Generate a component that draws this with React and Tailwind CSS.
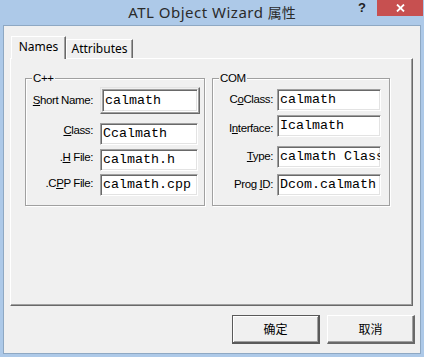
import React from 'react';

const label = "font-['Liberation_Sans',sans-serif] text-[11.5px] tracking-[-0.4px] text-black leading-none whitespace-nowrap";
const mono = "font-['Liberation_Mono',monospace] text-[13.33px] text-black leading-none whitespace-nowrap";

// sunken edit field, classic 3D look
function Field({ value, w, h = 22 }) {
  return (
    <div
      className={`flex items-center overflow-hidden bg-white pl-[1px] border border-t-[#a0a0a0] border-l-[#a0a0a0] border-r-white border-b-white shadow-[inset_1px_1px_0_#696969,inset_-1px_-1px_0_#e3e3e3] ${mono}`}
      style={{ width: w, height: h }}
    >
      <span className="pl-[1px]">{value}</span>
    </div>
  );
}

function Row({ children, text, labelW, gap, mt, shift = '' }) {
  return (
    <div className="flex items-center" style={{ marginTop: mt }}>
      <div className={`text-right ${label} ${shift}`} style={{ width: labelW, marginRight: gap }}>
        {text}
      </div>
      {children}
    </div>
  );
}

function Group({ title, w, children }) {
  return (
    <div
      className="relative h-[128px] border border-[#a0a0a0] shadow-[inset_1px_1px_0_#fff,1px_1px_0_#fff]"
      style={{ width: w }}
    >
      <span className={`absolute -top-[6px] left-[6px] px-[1px] bg-[#f0f0f0] ${label}`}>{title}</span>
      {children}
    </div>
  );
}

export default function App() {
  return (
    <div className="w-[424px] h-[357px] bg-[#adc9e8] flex flex-col overflow-hidden">
      {/* title bar */}
      <div className="h-[25px] grid grid-cols-[1fr_auto_1fr] items-start">
        <div />
        <div className="pt-[2px] font-['Noto_Sans','Noto_Sans_CJK_SC',sans-serif] text-[15px] tracking-[0.5px] leading-[20px] text-[#2b2b2b] whitespace-nowrap">
          ATL Object Wizard <span className="text-[14px] tracking-normal">属性</span>
        </div>
        <div className="flex justify-end items-start">
          <span className="pt-[1px] font-['Liberation_Sans',sans-serif] font-bold text-[13px] leading-[13px] text-[#222]">?</span>
          <div className="ml-[11px] mr-[1px] w-[46px] h-[16px] bg-[#c75050] flex items-center justify-center">
            <svg width="9" height="8" viewBox="0 0 9 8">
              <path d="M1 0.5 L8 7.5 M8 0.5 L1 7.5" stroke="#fff" strokeWidth="1.8" />
            </svg>
          </div>
        </div>
      </div>

      {/* client area */}
      <div className="flex-1 mx-[3px] mb-[3px] bg-[#f0f0f0] border border-[#8ea8c3] flex flex-col pl-[6px] pt-[10px]">
        {/* tabs */}
        <div className="flex items-end h-[22px] font-['Noto_Sans',sans-serif] text-[12px] text-black">
          <div className="relative z-10 ml-[1px] mb-[-1px] w-[55px] h-[23px] bg-[#f0f0f0] border-t border-l border-white border-r border-r-[#696969] shadow-[inset_-1px_0_0_#a0a0a0] flex justify-center pt-[2px] leading-[16px]">
            Names
          </div>
          <div className="w-[67px] h-[19px] border-t border-l border-white border-r border-r-[#696969] shadow-[inset_-1px_0_0_#a0a0a0] flex justify-center pt-[1px] leading-[16px]">
            Attributes
          </div>
        </div>

        {/* panel */}
        <div className="w-[403px] h-[248px] border-t border-l border-white border-r border-b border-r-[#696969] border-b-[#696969] shadow-[inset_-1px_-1px_0_#a0a0a0] pl-[14px] pt-[19px] flex gap-[7px]">
          <Group title="C++" w={180}>
            <Row text={<><u>S</u>hort Name:</>} labelW={67} gap={7} mt={8}>
              <div className="w-[100px] h-[27px] p-[1px] border border-t-[#e3e3e3] border-l-[#e3e3e3] border-r-[#696969] border-b-[#696969] shadow-[inset_-1px_-1px_0_#a0a0a0]">
                <Field value="calmath" w={96} h={23} />
              </div>
            </Row>
            <Row text={<><u>C</u>lass:</>} labelW={67} gap={7} mt={9} shift="mb-[6px]">
              <Field value="Ccalmath" w={98} />
            </Row>
            <Row text={<>.<u>H</u> File:</>} labelW={67} gap={7} mt={4} shift="mb-[4px]">
              <Field value="calmath.h" w={98} />
            </Row>
            <Row text={<>.C<u>P</u>P File:</>} labelW={67} gap={7} mt={3} shift="mb-[3px]">
              <Field value="calmath.cpp" w={98} />
            </Row>
          </Group>

          <Group title="COM" w={178}>
            <Row text={<>C<u>o</u>Class:</>} labelW={60} gap={4} mt={10}>
              <Field value="calmath" w={104} />
            </Row>
            <Row text={<>I<u>n</u>terface:</>} labelW={60} gap={4} mt={4} shift="mt-[6px]">
              <Field value="Icalmath" w={104} />
            </Row>
            <Row text={<><u>T</u>ype:</>} labelW={60} gap={4} mt={9}>
              <Field value="calmath Class" w={104} />
            </Row>
            <Row text={<>Prog <u>I</u>D:</>} labelW={60} gap={4} mt={6}>
              <Field value="Dcom.calmath" w={104} />
            </Row>
          </Group>
        </div>

        {/* buttons */}
        <div className="flex justify-end gap-[7px] pr-[5px] mt-[9px] font-['Noto_Sans_CJK_SC',sans-serif] text-[12px] text-black">
          <button className="w-[88px] h-[29px] bg-[#f0f0f0] border border-[#5a5a5a] border-r-2 border-b-2 shadow-[inset_1px_1px_0_#fff,inset_-1px_-1px_0_#a0a0a0] flex items-center justify-center">
            确定
          </button>
          <button className="w-[88px] h-[29px] bg-[#f0f0f0] border-t border-l border-white border-r-2 border-b-2 border-r-[#696969] border-b-[#696969] shadow-[inset_-1px_-1px_0_#a0a0a0] flex items-center justify-center">
            取消
          </button>
        </div>
      </div>
    </div>
  );
}
